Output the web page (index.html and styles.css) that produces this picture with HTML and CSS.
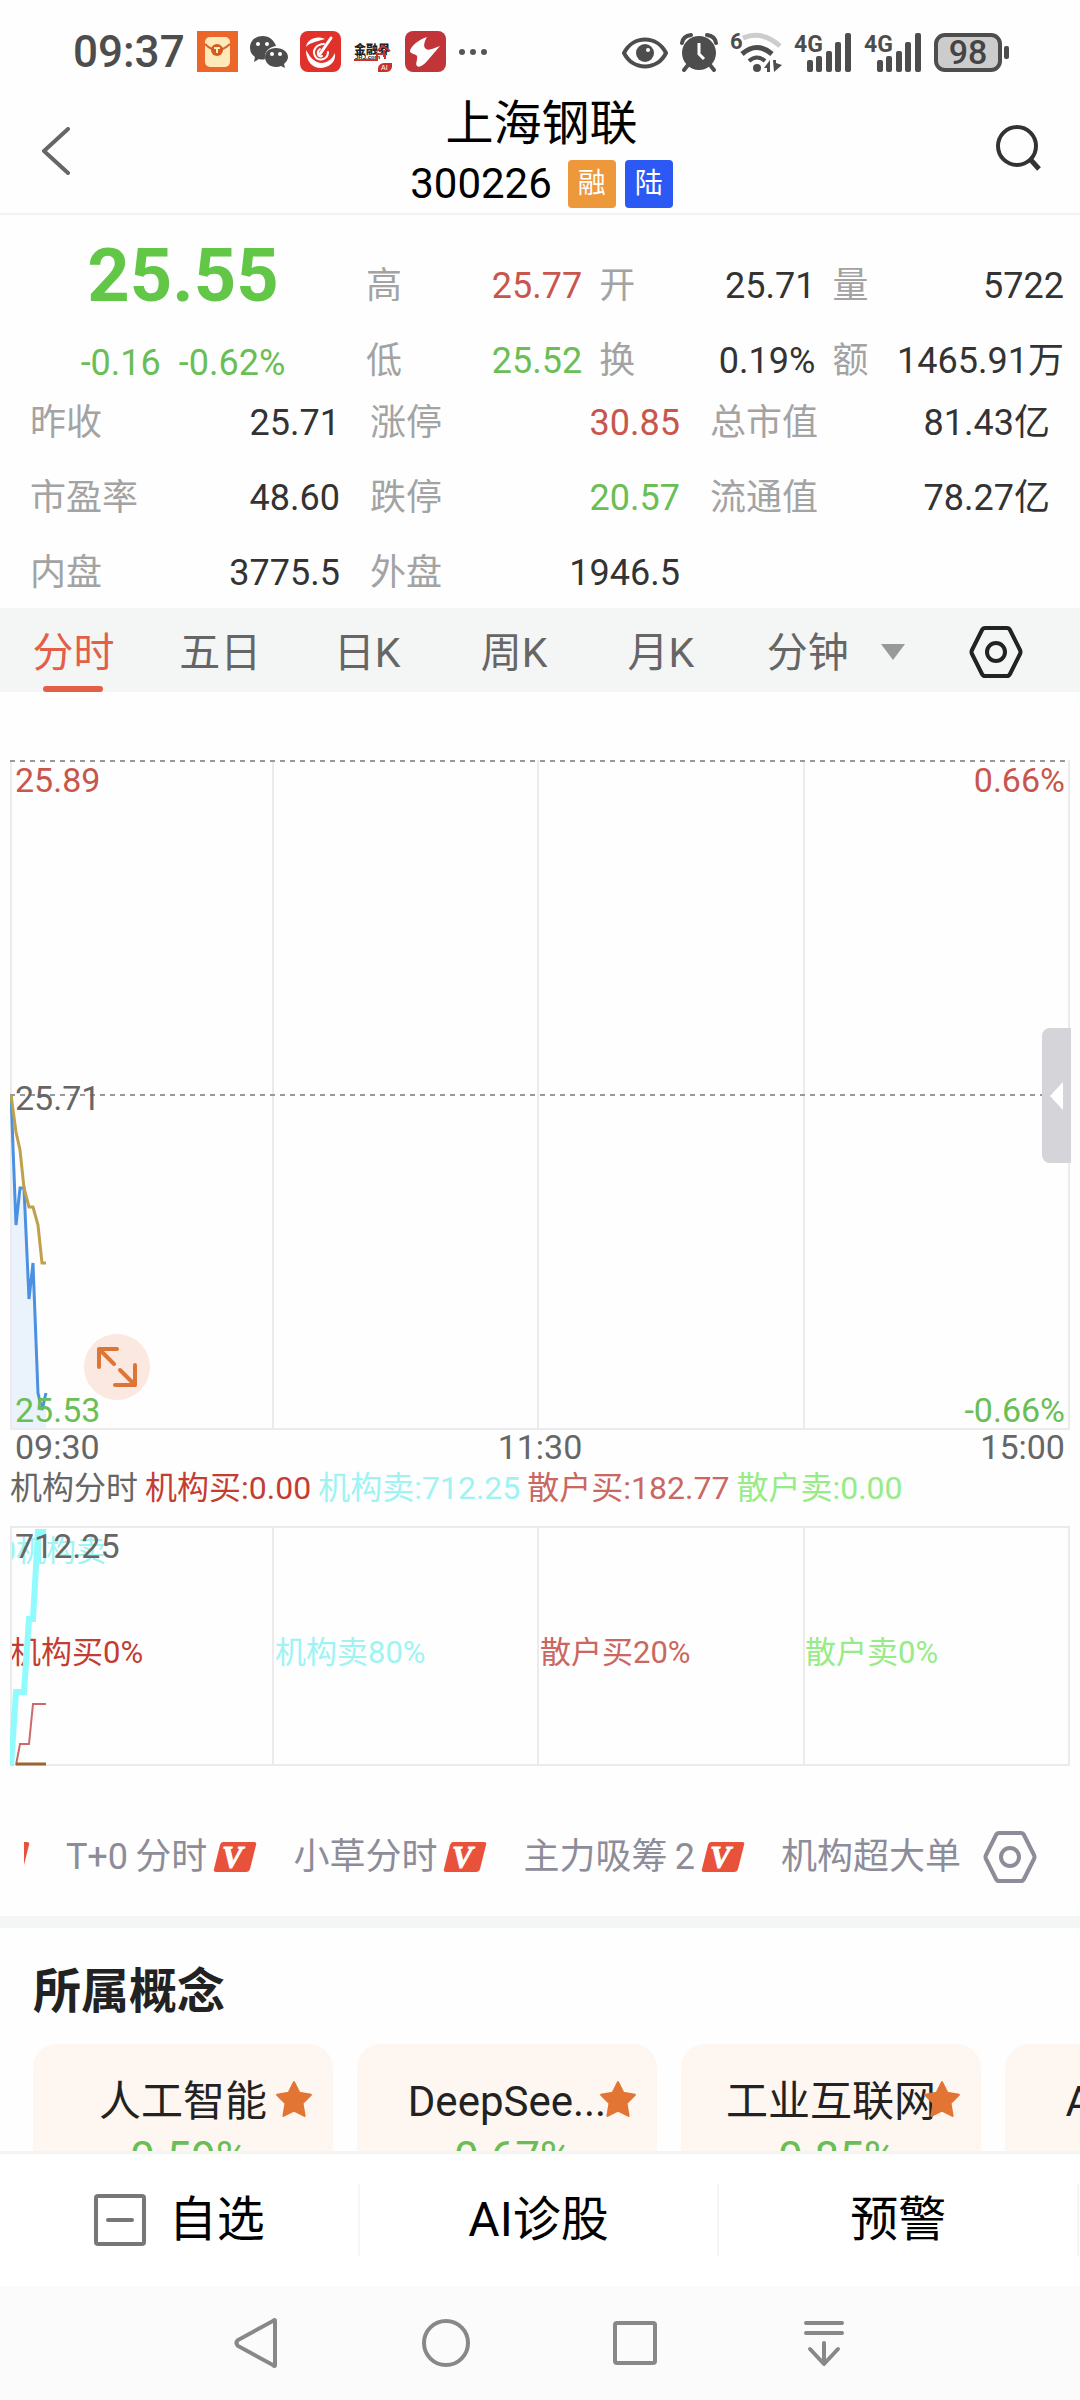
FILE: index.html
```html
<!DOCTYPE html>
<html lang="zh-CN">

<head>
    <meta charset="UTF-8">
    <meta name="viewport" content="width=device-width, initial-scale=1.0">
    <title>上海钢联 300226</title>
    <link rel="stylesheet" href="styles.css">
</head>

<body>

    <!-- shared icons -->
    <svg class="sprite" aria-hidden="true">
        <symbol id="icon-vip" viewBox="0 0 44 30">
            <path d="M10 0H41Q44 0 43 3L37 27Q36 30 33 30H3Q0 30 1 27L7 3Q8 0 10 0Z" fill="#e8523a"/>
            <text x="9" y="26" font-family="Liberation Serif" font-size="31" font-weight="bold" font-style="italic" fill="#fff" stroke="#fff">V</text>
        </symbol>
        <symbol id="icon-star" viewBox="0 0 36 36">
            <path d="M18 2L23 12L34 14L26 22L28 34L18 29L8 34L10 22L2 14L13 12Z" fill="#e27533" stroke="#e27533" stroke-width="2" stroke-linejoin="round"/>
        </symbol>
        <symbol id="icon-hex" viewBox="0 0 54 54">
            <path d="M16 3H38Q40 3 41 5L51 25Q52 27 51 29L41 49Q40 51 38 51H16Q14 51 13 49L3 29Q2 27 3 25L13 5Q14 3 16 3Z" fill="none" stroke="currentColor" stroke-width="4"/>
            <circle cx="27" cy="27" r="9" fill="none" stroke="currentColor" stroke-width="4"/>
        </symbol>
        <symbol id="icon-signal" viewBox="0 0 58 40">
            <text x="0" y="20" font-family="Roboto" font-size="23" font-weight="bold" fill="#4d4d4d">4G</text>
            <g fill="#4d4d4d">
                <rect x="13" y="28" width="6" height="12" rx="2"/>
                <rect x="22" y="24" width="6" height="16" rx="2"/>
                <rect x="32" y="19" width="6" height="21" rx="2"/>
                <rect x="41" y="10" width="6" height="30" rx="2"/>
                <rect x="51" y="1" width="6" height="39" rx="2"/>
            </g>
        </symbol>
    </svg>

    <div class="status-bar">
        <div class="status-left">
            <span class="clock">09:37</span>
            <svg width="41" height="41" viewBox="0 0 41 41">
                <rect width="41" height="41" fill="#ec6529"/>
                <rect x="8" y="6" width="25" height="30" rx="5" fill="#fdeab8"/>
                <path d="M8 13Q20 25 33 13" fill="none" stroke="#d9622a" stroke-width="2"/>
                <circle cx="20" cy="19" r="6" fill="#d35a22"/>
                <path d="M17 17H23M20 17V22" stroke="#fdeab8" stroke-width="2"/>
            </svg>
            <svg width="38" height="32" viewBox="0 0 38 32">
                <path d="M13 0C5 0 0 5 0 12C0 16 2 19 5 21L4 26L9 23Q12 24 15 23C14 16 19 11 26 10C24 4 19 0 13 0Z" fill="#4d4d4d"/>
                <path d="M26 12C19 12 15 16 15 21C15 27 20 31 26 31Q29 31 31 30L35 32L34 28C36 26 38 24 38 21C38 16 33 12 26 12Z" fill="#4d4d4d"/>
                <circle cx="8" cy="8" r="2" fill="#fff"/><circle cx="17" cy="8" r="2" fill="#fff"/>
                <circle cx="22" cy="18" r="2" fill="#fff"/><circle cx="30" cy="18" r="2" fill="#fff"/>
            </svg>
            <svg width="41" height="41" viewBox="0 0 41 41">
                <rect width="41" height="41" rx="8" fill="#e0322b"/>
                <path d="M25 8C17 4 7 8 6 16C9 12 15 11 25 8ZM6 19C6 30 12 37 21 37C30 36 36 31 35 22C31 30 24 34 17 31C11 28 9 24 6 19Z" fill="#fff"/>
                <g fill="none" stroke="#fff" stroke-linecap="round">
                    <path d="M24 13C16 13 12 20 15 25C18 31 28 29 28 21M20 18C16 21 18 27 22 25" stroke-width="2"/>
                    <path d="M31 7L20 23" stroke-width="3"/>
                </g>
            </svg>
            <svg width="40" height="41" viewBox="0 0 40 41">
                <text x="1" y="23" font-family="Noto Sans CJK SC" font-size="12" font-weight="900" fill="#222">金融界</text>
                <text x="2" y="28" font-family="Liberation Sans" font-size="6" font-weight="bold" fill="#222">JRJ.com</text>
                <path d="M1 29H24V23H32V28M24 20L30 15L37 20M31 19V26" fill="none" stroke="#c8322c" stroke-width="2"/>
                <path d="M25 41V37Q26 32 32 32H39V36Q38 41 33 41Z" fill="#c8322c"/>
                <text x="28" y="39" font-family="Liberation Sans" font-size="7" fill="#fff">AI</text>
            </svg>
            <svg width="41" height="41" viewBox="0 0 41 41">
                <rect width="41" height="41" rx="8" fill="#c13438"/>
                <path d="M22 6C13 9 6 15 5 20C5 23 11 23 12 25C13 28 10 33 12 35C14 37 18 35 23 29L35 15C29 17 24 20 21 18C18 16 19 11 22 6Z" fill="#fff"/>
            </svg>
            <svg width="30" height="8" viewBox="0 0 30 8" fill="#555">
                <circle cx="4" cy="4" r="3"/><circle cx="15" cy="4" r="3"/><circle cx="26" cy="4" r="3"/>
            </svg>
        </div>
        <div class="status-right">
            <svg width="46" height="40" viewBox="0 0 46 40">
                <path d="M2 21C11 3 35 3 44 21C35 39 11 39 2 21Z" fill="none" stroke="#4d4d4d" stroke-width="4"/>
                <circle cx="23" cy="21" r="9" fill="#4d4d4d"/>
                <circle cx="26" cy="18" r="2" fill="#fff"/>
            </svg>
            <svg width="38" height="40" viewBox="0 0 38 40">
                <circle cx="19" cy="21" r="17" fill="#4d4d4d"/>
                <path d="M2 11Q3 4 11 3M36 11Q35 4 27 3M8 33L4 38M30 33L34 38" fill="none" stroke="#4d4d4d" stroke-width="4" stroke-linecap="round"/>
                <path d="M19 11V22L24 27" fill="none" stroke="#fff" stroke-width="3"/>
            </svg>
            <svg width="52" height="40" viewBox="0 0 52 40">
                <text x="0" y="17" font-family="Roboto" font-size="22" font-weight="bold" fill="#4d4d4d">6</text>
                <g fill="none" stroke="#4d4d4d" stroke-width="5">
                    <path d="M13 6Q32 -2 50 14" stroke="#ccc"/>
                    <path d="M12 22Q27 9 42 22"/>
                    <path d="M19 29Q27 22 35 29" stroke-width="4"/>
                </g>
                <circle cx="27" cy="36" r="4" fill="#4d4d4d"/>
                <path d="M34 36L40 28V40H37V36ZM43 28H46V31L52 33L44 40Z" fill="#4d4d4d"/>
            </svg>
            <svg width="58" height="40"><use href="#icon-signal"/></svg>
            <svg width="58" height="40"><use href="#icon-signal"/></svg>
            <svg width="76" height="40" viewBox="0 0 76 40">
                <rect x="2" y="3" width="64" height="35" rx="9" fill="#ccc" stroke="#4d4d4d" stroke-width="4"/>
                <text x="34" y="32" text-anchor="middle" font-family="Roboto" font-size="34" font-weight="500" fill="#444">98</text>
                <rect x="70" y="14" width="5" height="13" rx="2" fill="#4d4d4d"/>
            </svg>
        </div>
    </div>

    <header class="header">
        <button class="icon-button" aria-label="返回">
            <svg width="30" height="48" viewBox="0 0 30 48">
                <path d="M27 2L3 24L27 46" fill="none" stroke="#666" stroke-width="4" stroke-linecap="round" stroke-linejoin="round"/>
            </svg>
        </button>
        <div class="header-title">
            <h1>上海钢联</h1>
            <div class="header-code">
                <span>300226</span>
                <span class="tags">
                    <span class="tag tag-orange">融</span>
                    <span class="tag tag-blue">陆</span>
                </span>
            </div>
        </div>
        <button class="icon-button" aria-label="搜索">
            <svg width="46" height="54" viewBox="0 0 46 54">
                <circle cx="21" cy="22" r="19" fill="none" stroke="#333" stroke-width="4"/>
                <path d="M34 35L43 45" stroke="#333" stroke-width="5"/>
            </svg>
        </button>
    </header>

    <main class="content">

        <section class="quote">
            <div class="quote-main">
                <div class="quote-price">
                    <div class="price">25.55</div>
                    <div class="change"><span>-0.16</span><span>-0.62%</span></div>
                </div>
                <dl class="quote-grid">
                    <div class="pair"><dt>高</dt><dd class="up">25.77</dd></div>
                    <div class="pair"><dt>开</dt><dd>25.71</dd></div>
                    <div class="pair"><dt>量</dt><dd>5722</dd></div>
                    <div class="pair"><dt>低</dt><dd class="down">25.52</dd></div>
                    <div class="pair"><dt>换</dt><dd>0.19%</dd></div>
                    <div class="pair"><dt>额</dt><dd>1465.91万</dd></div>
                </dl>
            </div>
            <dl class="stats">
                <div class="pair"><dt>昨收</dt><dd>25.71</dd></div>
                <div class="pair"><dt>涨停</dt><dd class="up">30.85</dd></div>
                <div class="pair"><dt>总市值</dt><dd>81.43亿</dd></div>
                <div class="pair"><dt>市盈率</dt><dd>48.60</dd></div>
                <div class="pair"><dt>跌停</dt><dd class="down">20.57</dd></div>
                <div class="pair"><dt>流通值</dt><dd>78.27亿</dd></div>
                <div class="pair"><dt>内盘</dt><dd>3775.5</dd></div>
                <div class="pair"><dt>外盘</dt><dd>1946.5</dd></div>
            </dl>
        </section>

        <nav class="tabs">
            <button class="tab active">分时</button>
            <button class="tab">五日</button>
            <button class="tab">日K</button>
            <button class="tab">周K</button>
            <button class="tab">月K</button>
            <select class="tab" aria-label="分钟">
                <option>分钟</option>
            </select>
            <div class="tabs-end">
                <svg width="24" height="16" viewBox="0 0 24 16"><path d="M0 0H24L12 16Z" fill="#999"/></svg>
                <button class="icon-button" aria-label="设置">
                    <svg width="54" height="54"><use href="#icon-hex"/></svg>
                </button>
            </div>
        </nav>

        <section class="charts">
            <div class="chart chart-price">
                <svg class="plot" viewBox="0 0 1060 670" preserveAspectRatio="none">
                    <path d="M1 335L6 465L10 428H14L19 539L23 503L28 633L32 650L36 633V669H1Z" fill="#eaf2fc"/>
                    <path d="M1 0V670M263 0V670M528 0V670M794 0V670M1059 0V670M0 669H1060" class="grid-line"/>
                    <path d="M0 1H1060M0 335H1060" class="dash-line"/>
                    <path d="M1 335L6 465L10 428H14L19 539L23 503L28 633L32 650L36 633" class="line line-price"/>
                    <path d="M1 335L6 372L10 390L14 428L19 447H23L28 465L32 503H36" class="line line-average"/>
                </svg>
                <span class="axis axis-top up">25.89</span>
                <span class="axis axis-top axis-right up">0.66%</span>
                <span class="axis axis-middle">25.71</span>
                <span class="axis axis-bottom down">25.53</span>
                <span class="axis axis-bottom axis-right down">-0.66%</span>
                <button class="expand" aria-label="全屏">
                    <svg width="42" height="42" viewBox="0 0 42 42" fill="none" stroke="#dc7535" stroke-width="4" stroke-linecap="round" stroke-linejoin="round">
                        <path d="M21 3H3V21M3 3L18 18M24 24L39 39M39 19V39H19"/>
                    </svg>
                </button>
                <button class="handle" aria-label="展开盘口">
                    <svg width="13" height="28" viewBox="0 0 13 28"><path d="M13 0V28L0 14Z" fill="#fff"/></svg>
                </button>
            </div>
            <div class="times"><span>09:30</span><span>11:30</span><span>15:00</span></div>

            <div class="legend">
                <span>机构分时</span>
                <span class="inst-buy">机构买:0.00</span>
                <span class="inst-sell">机构卖:712.25</span>
                <span class="retail-buy">散户买:182.77</span>
                <span class="retail-sell">散户卖:0.00</span>
            </div>
            <div class="chart chart-flow">
                <div class="shares">
                    <span class="inst-buy">机构买0%</span>
                    <span class="inst-sell">机构卖80%</span>
                    <span class="retail-buy">散户买20%</span>
                    <span class="retail-sell">散户卖0%</span>
                </div>
                <span class="flow-mark inst-sell">0机构卖</span>
                <svg class="plot" viewBox="0 0 1060 240" preserveAspectRatio="none">
                    <path d="M1 0V240M263 0V240M528 0V240M794 0V240M1059 0V240M0 239H1060" class="grid-line"/>
                    <path d="M0 1H1060" class="grid-line"/>
                    <path d="M1 240L6 166H14L19 93H23L28 6H36" class="line line-inst-sell"/>
                    <path d="M6 239L10 218H19L23 178H36" class="line line-retail-buy"/>
                    <path d="M6 238H36" class="line line-zero"/>
                </svg>
                <span class="axis axis-top">712.25</span>
            </div>
        </section>

        <nav class="indicators">
            <div class="indicator-list">
                <button class="indicator" aria-label="上一指标"><svg class="vip"><use href="#icon-vip"/></svg></button>
                <button class="indicator">T+0&thinsp;分时<svg class="vip"><use href="#icon-vip"/></svg></button>
                <button class="indicator">小草分时<svg class="vip"><use href="#icon-vip"/></svg></button>
                <button class="indicator">主力吸筹&thinsp;2<svg class="vip"><use href="#icon-vip"/></svg></button>
                <button class="indicator">机构超大单</button>
            </div>
            <button class="icon-button" aria-label="指标设置">
                <svg width="54" height="54"><use href="#icon-hex"/></svg>
            </button>
        </nav>

        <section class="concepts">
            <h2>所属概念</h2>
            <div class="cards">
                <a class="card" href="#"><span class="card-name">人工智能</span><span class="card-change">-0.59%</span><svg class="star"><use href="#icon-star"/></svg></a>
                <a class="card" href="#"><span class="card-name">DeepSee...</span><span class="card-change">-0.67%</span><svg class="star"><use href="#icon-star"/></svg></a>
                <a class="card" href="#"><span class="card-name">工业互联网</span><span class="card-change">-0.85%</span><svg class="star"><use href="#icon-star"/></svg></a>
                <a class="card" href="#"><span class="card-name">AIGC概念</span></a>
            </div>
        </section>

    </main>

    <footer class="actions">
        <button class="action">
            <svg width="54" height="54" viewBox="0 0 54 54" fill="none" stroke="#777" stroke-width="4">
                <rect x="3" y="3" width="48" height="48" rx="2"/>
                <path d="M15 27H39" stroke-linecap="round"/>
            </svg>
            自选
        </button>
        <button class="action">AI诊股</button>
        <button class="action">预警</button>
    </footer>

    <nav class="system-nav">
        <button class="icon-button" aria-label="后退">
            <svg width="50" height="50" viewBox="0 0 50 50"><path d="M43 3V47Q43 49 41 47L6 28Q3 25 6 22L41 3Q43 1 43 3Z" fill="none" stroke="#888" stroke-width="4"/></svg>
        </button>
        <button class="icon-button" aria-label="主页">
            <svg width="50" height="50" viewBox="0 0 50 50"><circle cx="25" cy="25" r="22" fill="none" stroke="#888" stroke-width="4"/></svg>
        </button>
        <button class="icon-button" aria-label="最近任务">
            <svg width="50" height="50" viewBox="0 0 50 50"><rect x="5" y="5" width="40" height="40" rx="2" fill="none" stroke="#888" stroke-width="4"/></svg>
        </button>
        <button class="icon-button" aria-label="下拉通知">
            <svg width="50" height="50" viewBox="0 0 50 50"><path d="M7 5H43M7 15H43M25 25V46M11 31L25 46L39 31" fill="none" stroke="#888" stroke-width="4" stroke-linecap="round" stroke-linejoin="round"/></svg>
        </button>
    </nav>

</body>

</html>
```

FILE: styles.css
```css
* {
    box-sizing: border-box;
}

body {
    display: flex;
    flex-direction: column;
    height: 100vh;
    margin: 0;
    overflow: hidden;
    background-color: #fefefe;
    color: #333;
    font-family: Roboto, "Noto Sans CJK SC", sans-serif;
    font-size: 36px;
}

h1,
h2,
dl,
dd {
    margin: 0;
}

button,
select {
    padding: 0;
    border: none;
    background: none;
    color: inherit;
    font-family: inherit;
    cursor: pointer;
}

svg {
    display: block;
    flex: none;
}

.sprite {
    display: none;
}

.icon-button {
    display: flex;
    align-items: center;
    justify-content: center;
}

.up {
    color: #c8564d;
}

.down {
    color: #69be56;
}

/* status bar */
.status-bar {
    display: flex;
    align-items: center;
    justify-content: space-between;
    height: 93px;
    padding: 10px 70px 0 73px;
}

.status-left,
.status-right {
    display: flex;
    align-items: center;
    gap: 12px;
}

.clock {
    color: #4d4d4d;
    font-size: 44px;
    font-weight: 500;
}

/* header */
.header {
    display: grid;
    grid-template-columns: 1fr auto 1fr;
    align-items: center;
    padding: 0 38px 0 41px;
    border-bottom: 2px solid #f3f3f3;
    color: #000;
}

.header .icon-button {
    justify-self: start;
    padding-bottom: 4px;
}

.header .icon-button:last-child {
    justify-self: end;
}

.header-title {
    text-align: center;
}

.header h1 {
    font-size: 48px;
    font-weight: 400;
    line-height: 62px;
}

.header-code {
    display: flex;
    align-items: center;
    gap: 16px;
    font-size: 42px;
    line-height: 58px;
}

.tags {
    display: flex;
    gap: 9px;
}

.tag {
    width: 48px;
    border-radius: 4px;
    color: #fff;
    font-size: 28px;
    line-height: 48px;
    text-align: center;
}

.tag-orange {
    background-color: #ee983c;
}

.tag-blue {
    background-color: #2c59f3;
}

/* quote */
.content {
    flex: 1;
    min-height: 0;
    overflow: hidden;
}

.quote {
    padding: 17px 0 10px;
}

.quote-main {
    display: flex;
    align-items: flex-end;
    padding-right: 16px;
}

.quote-price {
    width: 34.4%;
    color: #69be56;
    text-align: center;
}

.price {
    color: #62c646;
    font-size: 74px;
    font-weight: 700;
    line-height: 88px;
}

.change {
    display: flex;
    justify-content: center;
    gap: 18px;
    margin-top: 20px;
    line-height: 46px;
}

.quote-grid {
    display: grid;
    flex: 1;
    grid-template-columns: 14fr 14fr 15fr;
    gap: 25px 17px;
}

.pair {
    display: flex;
    justify-content: space-between;
    line-height: 50px;
}

.pair dt {
    color: #a3a3a3;
}

.stats {
    display: grid;
    grid-template-columns: repeat(3, 1fr);
    row-gap: 25px;
    margin-top: 12px;
    padding: 0 30px;
}

.stats .pair:not(:nth-child(3n)) {
    padding-right: 30px;
}

/* period tabs */
.tabs {
    display: flex;
    align-items: center;
    height: 84px;
    padding-top: 4px;
    background-color: #f4f6f5;
    color: #666;
}

.tab {
    position: relative;
    flex: 0 0 13.6%;
    height: 80px;
    appearance: none;
    font-size: 41px;
    line-height: 82px;
    text-align: center;
    text-align-last: center;
}

.tab.active {
    color: #e45f48;
}

.tab.active::after {
    content: "";
    position: absolute;
    bottom: 0;
    left: 50%;
    width: 60px;
    height: 6px;
    margin-left: -30px;
    border-radius: 3px;
    background-color: #e45f48;
}

.tabs-end {
    display: flex;
    flex: 1;
    align-items: center;
    justify-content: space-between;
    padding-right: 57px;
    color: #222;
}

/* charts */
.charts {
    padding: 68px 10px 0;
    color: #666;
}

.chart {
    position: relative;
}

.chart-price {
    height: 670px;
}

.chart-flow {
    height: 240px;
    margin-top: 14px;
}

.plot {
    width: 100%;
    height: 100%;
}

.plot path {
    vector-effect: non-scaling-stroke;
}

.grid-line {
    fill: none;
    stroke: #ebebeb;
    stroke-width: 2;
}

.dash-line {
    fill: none;
    stroke: #999;
    stroke-width: 2;
    stroke-dasharray: 5 5;
}

.line {
    fill: none;
    stroke-width: 3;
}

.line-price {
    stroke: #4c90e2;
}

.line-average {
    stroke: #c0a04c;
}

.line-inst-sell {
    stroke: #8ffbff;
    stroke-width: 6;
}

.line-retail-buy {
    stroke: #cb6a66;
    stroke-width: 2;
}

.line-zero {
    stroke: #9a6433;
}

.axis {
    position: absolute;
    left: 5px;
    font-size: 34px;
    line-height: 40px;
}

.axis-top {
    top: 0;
}

.axis-middle {
    top: 318px;
}

.axis-bottom {
    bottom: 0;
}

.axis-right {
    right: 5px;
    left: auto;
}

.expand {
    position: absolute;
    bottom: 30px;
    left: 74px;
    display: flex;
    align-items: center;
    justify-content: center;
    width: 66px;
    height: 66px;
    border-radius: 50%;
    background-color: #fbe8e0;
}

.handle {
    position: absolute;
    top: 268px;
    right: -1px;
    display: flex;
    align-items: center;
    justify-content: center;
    width: 29px;
    height: 135px;
    border-radius: 8px 0 0 8px;
    background-color: #d5d4d9;
}

.times {
    display: flex;
    justify-content: space-between;
    padding: 0 5px;
    font-size: 34px;
    line-height: 34px;
}

.legend {
    display: flex;
    gap: 7px;
    font-size: 32px;
    line-height: 48px;
    white-space: nowrap;
}

.inst-buy {
    color: #c43d31;
}

.inst-sell {
    color: #9ff3f3;
}

.retail-buy {
    color: #cb6760;
}

.retail-sell {
    color: #96ec86;
}

.shares {
    position: absolute;
    top: 104px;
    display: grid;
    grid-template-columns: repeat(4, 1fr);
    width: 100%;
    font-size: 31px;
    line-height: 46px;
}

.flow-mark {
    position: absolute;
    top: 4px;
    left: 0;
    display: flex;
    justify-content: flex-end;
    width: 96px;
    overflow: hidden;
    font-size: 30px;
    line-height: 42px;
    white-space: nowrap;
}

/* the plot lines run over the share labels */
.chart-flow .plot {
    position: relative;
}

/* indicators */
.indicators {
    display: flex;
    align-items: center;
    justify-content: space-between;
    height: 150px;
    padding: 31px 43px 0 24px;
    color: #8d8c99;
}

.indicator-list {
    display: flex;
    flex: 1;
    justify-content: flex-end;
    gap: 36px;
    margin-right: 22px;
    overflow: hidden;
}

.indicator {
    display: flex;
    flex: none;
    align-items: center;
    gap: 6px;
    font-size: 36px;
    line-height: 50px;
    white-space: nowrap;
}

.vip {
    width: 44px;
    height: 30px;
}

/* concepts */
.concepts {
    padding: 35px 0 0 33px;
    border-top: 12px solid #f4f6f5;
    color: #222;
}

.concepts h2 {
    font-size: 48px;
    font-weight: 700;
    line-height: 58px;
}

.cards {
    display: flex;
    gap: 24px;
    margin-top: 23px;
}

.card {
    position: relative;
    flex: 0 0 300px;
    height: 170px;
    padding-top: 31px;
    border-radius: 24px;
    background-color: #fdf6f1;
    color: #222;
    font-size: 42px;
    text-align: center;
    text-decoration: none;
}

.card-name,
.card-change {
    display: block;
    line-height: 54px;
}

.card-change {
    color: #69be56;
    font-size: 44px;
    line-height: 58px;
}

.star {
    position: absolute;
    top: 36px;
    right: 20px;
    width: 38px;
    height: 38px;
}

/* bottom bars */
.actions {
    display: flex;
    align-items: center;
    height: 135px;
    padding-right: 1px;
    border-top: 3px solid #f3f5f4;
    background-color: #fff;
}

.action {
    display: flex;
    flex: 1;
    align-items: center;
    justify-content: center;
    gap: 22px;
    height: 72px;
    border-right: 2px solid #f6f6f6;
    color: #000;
    font-size: 48px;
    line-height: 68px;
}

.system-nav {
    display: grid;
    grid-template-columns: repeat(4, 1fr);
    height: 114px;
    padding: 0 15%;
    background-color: #fbfbfb;
}
```
